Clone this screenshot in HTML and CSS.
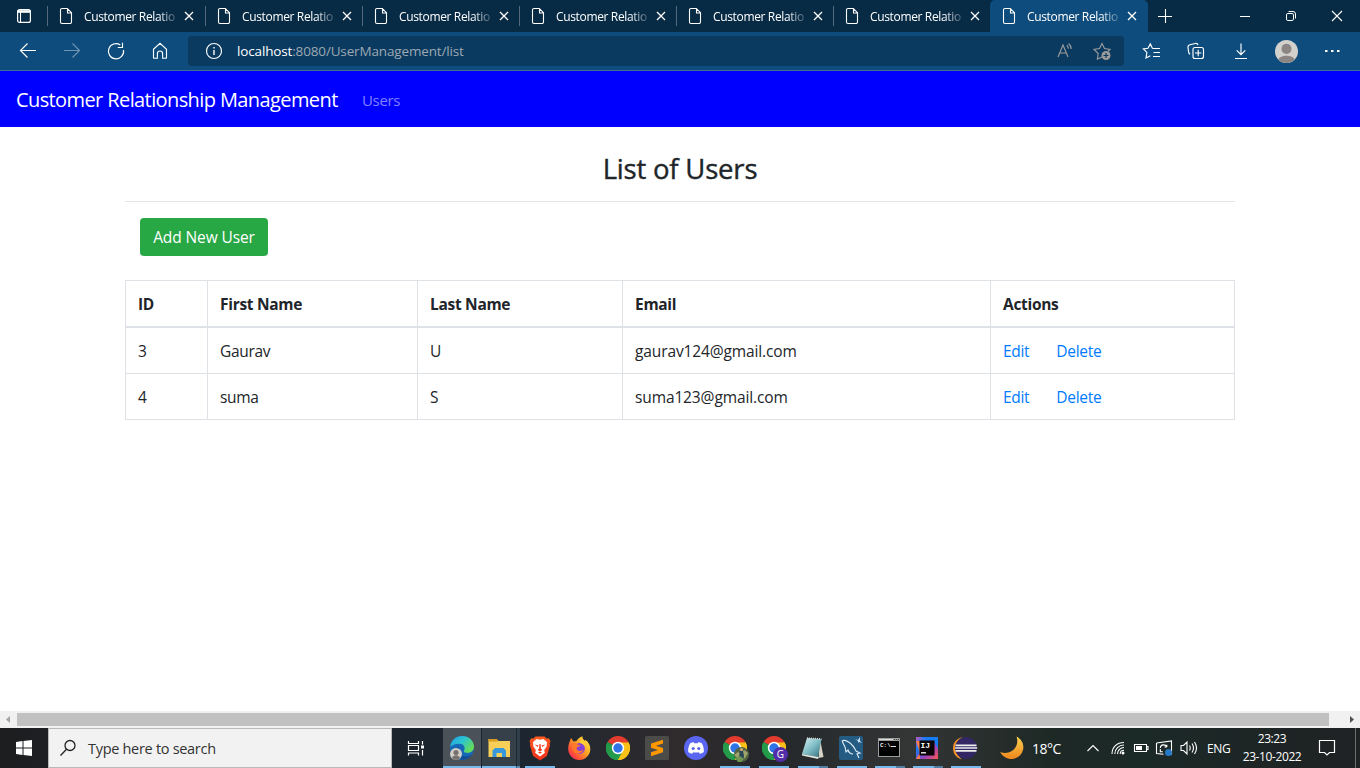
FILE: index.html
```html
<!DOCTYPE html>
<html lang="en">
<head>
<meta charset="utf-8">
<title>User Management</title>
<link rel="stylesheet" href="styles.css">
</head>
<body>
<svg class="defs" width="0" height="0">
  <defs>
    <symbol id="page" viewBox="0 0 14 18"><path d="M2.5 1.5h5.800l4.200 4.200v9.300a1.500 1.500 0 0 1-1.500 1.500H3A1.500 1.500 0 0 1 1.500 15V3A1.500 1.500 0 0 1 3 1.500zM8.500 1.800V6h4" fill="none" stroke="#fff" stroke-width="1.100"/></symbol>
    <symbol id="close" viewBox="0 0 10 10"><path d="M1 1l8 8M9 1l-8 8" fill="none" stroke="#fff" stroke-width="1.300"/></symbol>
    <symbol id="chrome" viewBox="0 0 24 24"><path d="M12 12L1.600 6A12 12 0 0 1 22.400 6z" fill="#e33b2e"/><path d="M12 12L22.400 6A12 12 0 0 1 12 24z" fill="#fbc116"/><path d="M12 12v12A12 12 0 0 1 1.600 6z" fill="#249b4b"/><path d="M12 6.400h10.600L12 12z" fill="#fbc116"/><path d="M6.700 15L12 24l5.300-9z" fill="#fbc116"/><path d="M6.700 15L1.600 6A12 12 0 0 0 12 24l5-9z" fill="#249b4b"/><path d="M12 24l5.300-9 5.300-8.600A12 12 0 0 1 12 24z" fill="#fbc116"/><circle cx="12" cy="12" r="6.200" fill="#fff"/><circle cx="12" cy="12" r="4.700" fill="#3075e8"/></symbol>
  </defs>
</svg>

<header class="tabstrip">
  <div class="workspace"><svg width="16" height="16" viewBox="0 0 16 16"><rect x="1.600" y="1.600" width="12.800" height="12.800" rx="2" fill="none" stroke="#fff" stroke-width="1.200"/><path d="M1.600 3.500h12.800" stroke="#fff" stroke-width="2.600"/><path d="M4.500 4v10.400" stroke="#fff" stroke-width="1.100"/></svg></div>
  <div class="tab first"><svg class="page"><use href="#page"/></svg><span class="tab-title">Customer Relatio</span><svg class="close"><use href="#close"/></svg></div>
  <div class="tab"><svg class="page"><use href="#page"/></svg><span class="tab-title">Customer Relatio</span><svg class="close"><use href="#close"/></svg></div>
  <div class="tab"><svg class="page"><use href="#page"/></svg><span class="tab-title">Customer Relatio</span><svg class="close"><use href="#close"/></svg></div>
  <div class="tab"><svg class="page"><use href="#page"/></svg><span class="tab-title">Customer Relatio</span><svg class="close"><use href="#close"/></svg></div>
  <div class="tab"><svg class="page"><use href="#page"/></svg><span class="tab-title">Customer Relatio</span><svg class="close"><use href="#close"/></svg></div>
  <div class="tab"><svg class="page"><use href="#page"/></svg><span class="tab-title">Customer Relatio</span><svg class="close"><use href="#close"/></svg></div>
  <div class="tab active"><svg class="page"><use href="#page"/></svg><span class="tab-title">Customer Relatio</span><svg class="close"><use href="#close"/></svg></div>
  <svg class="newtab" width="14" height="14" viewBox="0 0 14 14"><path d="M7.500 0v14M0 7.500h14" stroke="#fff" stroke-width="1.100"/></svg>
  <div class="window-controls">
    <span><svg width="12" height="12" viewBox="0 0 12 12"><path d="M1 6.500h10" stroke="#fff"/></svg></span>
    <span><svg width="12" height="12" viewBox="0 0 12 12" fill="none" stroke="#fff"><rect x="1.500" y="3.500" width="7" height="7" rx="1.400"/><path d="M3.500 1.500H8a2.500 2.500 0 0 1 2.500 2.500v4.500"/></svg></span>
    <span><svg width="12" height="12" viewBox="0 0 12 12"><path d="M1 1l10 10M11 1L1 11" stroke="#fff" stroke-width="1.100"/></svg></span>
  </div>
</header>

<div class="toolbar">
  <div class="nav-icons">
    <svg viewBox="0 0 20 20"><path d="M18 9.500H2.500M9.500 2.500l-7 7 7 7"/></svg>
    <svg class="dim" viewBox="0 0 20 20"><path d="M2 9.500h15.500M10.500 2.500l7 7-7 7"/></svg>
    <svg viewBox="0 0 20 20"><path d="M17.500 9A7.600 7.600 0 1 1 14.300 4M16.500 1.800v4.700h-4.700"/></svg>
    <svg viewBox="0 0 20 20"><path d="M3.500 8.300L10 2.400l6.500 5.900v8.300a.6.600 0 0 1-.6.600h-3.300v-4.600a2.600 2.600 0 0 0-5.200 0v4.600H4.100a.6.600 0 0 1-.6-.6z"/></svg>
  </div>
  <div class="address">
    <svg class="info" viewBox="0 0 18 18"><circle cx="9" cy="9" r="7.500"/><path d="M9 8v5M9 5v1.400" stroke-width="1.400"/></svg>
    <span class="url"><b>localhost</b>:8080/UserManagement/list</span>
    <svg class="addr-icon" viewBox="0 0 20 20"><path d="M3 16L8 4l5 12M4.700 12h6.600M11.800 4.300c1 .9 1.500 2 1.600 3.300M13.600 2.500c1.600 1.400 2.500 3.300 2.600 5.500"/></svg>
    <svg class="addr-icon" viewBox="0 0 20 20"><path d="M10 16l-4.600 2 .8-5.500L2 8.500l5.500-.9L10 2.500l2.500 5.100 5.500.9-2 2"/><circle cx="14" cy="14.500" r="4.500" fill="#9b9b9b" stroke="none"/><path d="M14 12v5M11.500 14.500h5" stroke="#0a3a60"/></svg>
  </div>
  <div class="tools">
    <svg viewBox="0 0 20 20"><path d="M10.500 7.500H18M10.500 7.500L8.300 2.800 6 7.300l-4.600.7 3.500 3.400-.9 5.600 4.300-2.300M11.500 11.500H18M11 15.500h7"/></svg>
    <svg viewBox="0 0 20 20"><rect x="7" y="6.500" width="10.500" height="11" rx="2"/><path d="M12.200 8.800v6.400M9 12h6.400M4.200 13.200c-.8-.3-1.400-.9-1.500-1.800L2 6.500c-.2-1.600.5-2.500 1.900-2.800l5.300-1.200c1.500-.3 2.500.3 2.800 1.600"/></svg>
    <svg viewBox="0 0 20 20"><path d="M10 2.500v11M5.700 9.300l4.300 4.300 4.300-4.300M4 17.500h12"/></svg>
    <svg class="avatar" viewBox="0 0 22 22"><circle cx="11" cy="11" r="11" fill="#d3d1ce"/><circle cx="11" cy="8.500" r="4.800" fill="#8b8683"/><path d="M3.200 18.700C5 14 17 14 18.800 18.700A11 11 0 0 1 3.200 18.700z" fill="#8b8683"/></svg>
    <svg viewBox="0 0 20 20"><path d="M3 10h2.500M9 10h2.500M15 10h2.500" stroke-width="2.200"/></svg>
  </div>
</div>

<nav class="navbar"><a class="brand">Customer Relationship Management</a><a class="nav-link">Users</a></nav>

<main class="content">
  <h3>List of Users</h3>
  <hr>
  <div class="actions"><a class="btn">Add New User</a></div>
  <table>
    <colgroup><col class="c-id"><col class="c-first"><col class="c-last"><col class="c-email"><col class="c-act"></colgroup>
    <thead><tr><th>ID</th><th>First Name</th><th>Last Name</th><th>Email</th><th>Actions</th></tr></thead>
    <tbody>
      <tr><td>3</td><td>Gaurav</td><td>U</td><td class="email">gaurav124@gmail.com</td><td><a class="edit">Edit</a><a>Delete</a></td></tr>
      <tr><td>4</td><td>suma</td><td>S</td><td class="email">suma123@gmail.com</td><td><a class="edit">Edit</a><a>Delete</a></td></tr>
    </tbody>
  </table>
</main>

<div class="scrollbar"><svg viewBox="0 0 17 17"><path d="M10 5v7L6 8.500z" fill="#a3a3a3"/></svg><div class="thumb"></div><svg class="right" viewBox="0 0 17 17"><path d="M7 5v7l4-3.500z" fill="#505050"/></svg></div>

<footer class="taskbar">
  <div class="start"><svg width="16" height="16" viewBox="0 0 16 16" fill="#fff"><path d="M0 2l6.500-.9v6.400H0zM7.500 1L16 0v7.500H7.500zM0 8.500h6.500v6.400L0 14zM7.500 8.500H16V16l-8.500-1z"/></svg></div>
  <div class="search"><svg width="18" height="18" viewBox="0 0 18 18" fill="none" stroke="#222" stroke-width="1.300"><circle cx="11" cy="6.500" r="5"/><path d="M7.500 10.200L1.500 16.500"/></svg><span>Type here to search</span></div>
  <div class="taskview"><svg width="18" height="18" viewBox="0 0 18 18" fill="none" stroke="#fff" stroke-width="1.200"><path d="M1.500 2v2.500h10V2M1.500 16.500V14h10v2.500M1.500 6.500h10v5h-10zM15.500 2v3.500M15.500 11v5.500"/><path d="M14 8h3" stroke-width="3"/></svg></div>
  <div class="app edge"><svg viewBox="0 0 24 24">
    <defs><linearGradient id="eg" x1="0" y1="0" x2="1" y2=".6"><stop offset="0" stop-color="#249ce0"/><stop offset=".5" stop-color="#2bc5d2"/><stop offset="1" stop-color="#65dc57"/></linearGradient></defs>
    <circle cx="12" cy="12" r="11.900" fill="#1769b8"/><path d="M.2 11C1.500 3.500 6 .1 12 .1c7 0 12 5 12 10.400 0 4-3 6.300-6.500 6.300-3 0-4-1.200-3.500-2.400 1.600-2.300.5-6-4-6.600C6 7.200 2 9 .2 11z" fill="url(#eg)"/><path d="M9 10c-1.700 3-.8 7.500 3 9.500 3.500 1.800 7.500.8 10-1.500-2.800 5-8.500 7-13 4.700C3 20 4 12 9 10z" fill="#124e95"/><circle cx="6" cy="18" r="6" fill="#d0cecb"/><circle cx="6" cy="16.500" r="2.600" fill="#77716e"/><path d="M2 22c1-3.600 7-3.600 8 0-2 2.500-6 2.500-8 0z" fill="#77716e"/></svg></div>
  <div class="app explorer"><svg viewBox="0 0 24 24"><path d="M1.500 3h8l2 2H23v16H1.500z" fill="#f7ce58"/><path d="M1.500 3h8l1.500 2.500H1.500z" fill="#d79b22"/><path d="M5.500 21v-6.500L8 12h8.500l2.500 2.500V21h-4v-4H9.500v4z" fill="#3898dc"/></svg></div>
  <div class="stack"></div>
  <div class="app run"><svg viewBox="0 0 24 24"><defs><linearGradient id="br" x2="0" y2="1"><stop stop-color="#ff5b21"/><stop offset="1" stop-color="#ed311b"/></linearGradient></defs><path d="M7.500.5h9l2 2 2.200-.3L22.500 5l-.8 2.300.4 1.700-3.200 11L12 24.500 5.100 20 1.900 9l.4-1.700L1.500 5l1.800-2.800 2.200.3z" fill="url(#br)"/><path d="M12 3.700l3.300-.6 3.700 3-.4 4.500-2.500 3.700.8 2.500L12 20.400l-4.900-3.600.8-2.500-2.500-3.700L5 6.100l3.700-3z" fill="#fff"/><path d="M6.500 8.500l4 1-.8 1.500zM17.500 8.500l-4 1 .8 1.500zM11.400 8h1.200l.3 4.500 1.500 1.500-2.400 1.200L9.600 14l1.500-1.500zM10 16.500l2-1 2 1-2 1.300z" fill="#f23b1e"/></svg></div>
  <div class="app"><svg viewBox="0 0 24 24"><defs><linearGradient id="ff" x1="1" y1="0" x2="0" y2="1"><stop stop-color="#fff34f"/><stop offset=".4" stop-color="#ffab25"/><stop offset=".75" stop-color="#ff4d38"/><stop offset="1" stop-color="#eb167f"/></linearGradient></defs><path d="M2.500 6L4 2l2.500 3.500 3-.5C11 2.500 13 1 15.500.3c-.5 2 1 3 2.200 4.500l.8-.8c3.200 2.300 4.800 5.200 4.800 9A11 11 0 0 1 1.200 13c0-3 .5-5 1.300-7z" fill="url(#ff)"/><circle cx="12.500" cy="12.500" r="5.400" fill="#8440d6"/><path d="M5 7.500c2-.7 4-.5 5.500 1l3 .6c-.5 1.500-2 1.600-3.200 1.900L9.500 13c2 2.700 5 2 7.200 1C14 19 7.500 18.500 6 14z" fill="#ff792d"/><path d="M14 4c3 2 4.500 4 4.500 7-1-2-3-3.700-5-4z" fill="#ffd43b"/></svg></div>
  <div class="app"><svg viewBox="0 0 24 24"><use href="#chrome"/></svg></div>
  <div class="app"><svg viewBox="0 0 24 24"><rect width="24" height="24" rx="1.500" fill="#4b4b4a"/><path d="M6 7.400l12-3.700v3.900l-7 2.200 7 2.300v4.200L6 20.200v-4l7-2.200-7-2.300z" fill="#ff9800"/></svg></div>
  <div class="app"><svg viewBox="0 0 24 24"><circle cx="12" cy="12" r="12" fill="#5966ef"/><path d="M9.500 6l-3.300 1.300C4.600 10 4 13 4.200 16c1.300 1 2.600 1.500 4 1.800l1-1.600c2 .5 3.700.5 5.600 0l1 1.600c1.400-.3 2.700-.8 4-1.800.2-3-.4-6-2-8.700L14.500 6l-.7 1.200h-3.600z" fill="#fff"/><circle cx="9.200" cy="12.500" r="1.600" fill="#5966ef"/><circle cx="14.800" cy="12.500" r="1.600" fill="#5966ef"/></svg></div>
  <div class="app run"><svg viewBox="0 0 24 24"><use href="#chrome"/><circle cx="18.500" cy="18.500" r="7.500" fill="#536442"/><path d="M11 19l4-3 3 2 3-4 4 3-3 5-5 2z" fill="#a0a66b"/><path d="M17 15h3l1 5-1 5h-3l-1-4z" fill="#28475b"/><circle cx="18.500" cy="13.500" r="1.500" fill="#d5ac83"/><path d="M12 22l5-2 4 3-3 3h-3z" fill="#719452"/></svg></div>
  <div class="app run"><svg viewBox="0 0 24 24"><use href="#chrome"/><circle cx="18.500" cy="18.500" r="7.500" fill="#512da8"/><text x="18.500" y="22" class="profile">G</text></svg></div>
  <div class="app run multi"><svg viewBox="0 0 24 24"><defs><linearGradient id="np" x2="1" y2="1"><stop stop-color="#d6f4f3"/><stop offset=".5" stop-color="#80bdc6"/><stop offset="1" stop-color="#326f7c"/></linearGradient></defs><path d="M19 3l3.500 18-5 1z" fill="#d5d3c7"/><path d="M6 2l14.500 1-3.500 18L1 18z" fill="url(#np)"/><path d="M1 18l16.500 3-.3 2L1 19.500z" fill="#e2e7df"/><path d="M6 2l14.500 1" stroke="#d4d5cf" stroke-width="1.500" stroke-dasharray="1 1"/></svg></div>
  <div class="app run narrow"><svg viewBox="0 0 24 24"><rect width="24" height="24" rx="2" fill="#245b83"/><path d="M3 5c3-2 5 0 8 2 4 3 5 6 6 8l4 2-3 .8L20 22M3 5l3 6 1 5 2-2c1 3 3 4 5 4" fill="none" stroke="#dfeff8" stroke-width="1.100"/><path d="M16 3l3 1 2-3v4l2 2-3-1-1 1V5z" fill="#c8e2f2"/></svg></div>
  <div class="app run multi narrow"><svg viewBox="0 0 24 24"><rect x="1" y="2" width="22" height="19" fill="#9d9e9e"/><rect x="2" y="5" width="20" height="15" fill="#020202"/><path d="M2 3.500h14" stroke="#ddd"/><path d="M17 3.500h5" stroke="#444" stroke-dasharray="1 1"/><text x="3" y="11" class="prompt">C:\.</text><path d="M14 10.500h5" stroke="#ddd"/></svg></div>
  <div class="app run multi narrow"><svg viewBox="0 0 24 24"><defs><linearGradient id="ij" x2="1" y2="1"><stop stop-color="#c757bc"/><stop offset=".3" stop-color="#147cf4"/><stop offset=".65" stop-color="#9c41bd"/><stop offset="1" stop-color="#fe554c"/></linearGradient></defs><rect x="1" y="1" width="22" height="22" fill="url(#ij)"/><path d="M1 5l4 12-4 6h4V5z" fill="#fc7b4c"/><path d="M5 1h18v12l-4-8z" fill="#147cf4"/><rect x="4.500" y="4.500" width="15" height="15" fill="#080408"/><text x="5.500" y="12" class="ij">IJ</text><path d="M6 16.800h5" stroke="#fff" stroke-width="1.300"/></svg></div>
  <div class="app run narrow"><svg viewBox="0 0 24 24"><path d="M9.500 1C2 3-.5 8 .2 14c.7 5 4 8 8.500 9.500C3.500 18 2 7 9.500 1z" fill="#f79425"/><circle cx="13" cy="12" r="11" fill="#332763"/><path d="M2.500 9.300h21M2.200 12h22M2.500 14.800h21" stroke="#eee" stroke-width="1.700"/></svg></div>
  <div class="weather"><svg width="24" height="24" viewBox="0 0 24 24"><defs><linearGradient id="mo" x2="0" y2="1"><stop stop-color="#f5d052"/><stop offset="1" stop-color="#ef861b"/></linearGradient></defs><path d="M16.500.5c5 2.500 8 8 6.500 13.500-2.500 10-17 13-22.800 2 6.500 2.300 12.500 0 15.500-5 2-3.500 2-7 .8-10.500z" fill="url(#mo)"/></svg><span>18°C</span></div>
  <svg class="tray chevron" viewBox="0 0 16 16"><path d="M2.500 11L8 5.500l5.500 5.500"/></svg>
  <svg class="tray wifi" viewBox="0 0 16 16"><path d="M2 14C2 7 7 2.500 14 2.500M4.800 14c0-5 4-9 9.200-9M7.500 14c0-3.500 3-6.500 6.500-6.500M10.200 14c0-2 1.600-3.700 3.800-3.700"/><circle cx="13" cy="13" r="1.500" fill="#fff" stroke="none"/></svg>
  <svg class="tray battery" viewBox="0 0 16 16"><path d="M1.500 4.500h12v7h-12zM13.500 6.500H15v3h-1.500"/><path d="M3 6h6v4H3z" fill="#fff" stroke="none"/></svg>
  <svg class="tray sync" viewBox="0 0 18 18"><path d="M1.500 4l15-2v13h-4M1.500 4v10.500l7 .8M5.300 9c.3-4 5.200-4 6.500-1V5.700M11.800 8H9.500M5.300 10v2.800h2.500"/><circle cx="13.500" cy="13.500" r="3.500" fill="#2779c7" stroke="none"/></svg>
  <svg class="tray volume" viewBox="0 0 18 18"><path d="M1 6.500h2.500L7 3v12l-3.500-3.500H1zM9.500 6.500c1 1.700 1 3.300 0 5M12 4.500c2 3 2 6 0 9M14.500 3c2.700 4 2.700 8 0 12"/></svg>
  <span class="lang">ENG</span>
  <div class="clock"><span>23:23</span><span class="date">23-10-2022</span></div>
  <svg class="notice" viewBox="0 0 18 18"><path d="M1.500 1.500h15v12h-5L9 16l-2.500-2.500h-5z"/></svg>
  <div class="desktop-edge"></div>
</footer>
</body>
</html>
```
FILE: styles.css
```css
* { box-sizing: border-box; }
body { margin: 0; width: 1360px; height: 768px; overflow: hidden; display: flex; flex-direction: column; background: #fff; color: #212529; font-family: "Open Sans", "Noto Sans", sans-serif; }
svg { display: block; flex: none; }
.defs { position: absolute; }

.tabstrip { height: 32px; background: #082b45; display: flex; align-items: center; flex: none; }
.workspace { width: 47px; padding-left: 16px; }
.tab { width: 157px; height: 32px; display: flex; align-items: center; padding-left: 12px; flex: none; position: relative; }
.tab.first { width: 158px; }
.tab:not(.active)::before { content: ""; position: absolute; left: 0; top: 6px; width: 1px; height: 20px; background: #56697a; }
.tab.active { width: 158px; background: #0d4c7c; border-radius: 5px 5px 0 0; }
.page { width: 14px; height: 18px; margin-right: 11px; }
.tab-title { width: 93px; white-space: nowrap; color: #fff; font-size: 12px; letter-spacing: -.35px; -webkit-mask-image: linear-gradient(90deg, #000 74px, transparent 96px); mask-image: linear-gradient(90deg, #000 74px, transparent 96px); }
.close { width: 10px; height: 10px; margin-left: 7px; }
.newtab { margin-left: 10px; }
.window-controls { display: flex; margin-left: auto; }
.window-controls span { width: 46px; display: flex; justify-content: center; }

.toolbar { height: 39px; background: #0d4c7c; border-bottom: 1px solid #3d7095; display: flex; align-items: center; flex: none; }
.toolbar svg { fill: none; stroke: #fff; stroke-width: 1.15; }
.nav-icons { width: 188px; display: flex; gap: 24px; padding-left: 18px; }
.nav-icons svg, .addr-icon { width: 20px; height: 20px; }
.nav-icons .dim { opacity: .4; }
.address { width: 936px; height: 30px; border-radius: 4px; background: #0a3a60; display: flex; align-items: center; padding: 0 12px 0 17px; }
.info { width: 18px; height: 18px; margin-right: 14px; }
.url { flex: 1; font-size: 13.5px; letter-spacing: -.15px; color: #9ca9b3; }
.url b { color: #fff; font-weight: 400; }
.toolbar .addr-icon { stroke: #9b9b9b; margin-left: 17px; }
.tools { flex: 1; display: flex; align-items: center; justify-content: space-between; padding: 0 18px; }
.tools svg { width: 20px; height: 20px; }
.tools .avatar { width: 23px; height: 23px; stroke: none; }

.navbar { height: 56px; background: #00f; display: flex; align-items: center; padding: 1px 0 0 16px; flex: none; }
.brand { width: 346px; color: #fff; font-size: 20px; letter-spacing: -.6px; white-space: nowrap; }
.nav-link { color: rgba(255,255,255,.5); font-size: 15px; letter-spacing: -.35px; }

.content { flex: 1; width: 1110px; margin: 0 auto; padding-top: 24px; min-height: 0; }
h3 { margin: 0 0 15px; font-size: 27.5px; line-height: 36px; height: 35px; font-weight: 500; letter-spacing: -.2px; -webkit-text-stroke: .4px #212529; text-align: center; }
hr { border: 0; border-top: 1px solid #e5e5e5; margin: 0; }
.actions { padding: 16px 15px 24px; display: flex; }
.btn { width: 128px; height: 38px; border-radius: 4px; background: #28a745; color: #fff; font-size: 15.5px; letter-spacing: -.1px; line-height: 39px; text-align: center; white-space: nowrap; }
table { width: 1109px; table-layout: fixed; border-collapse: collapse; font-size: 15.5px; letter-spacing: -.3px; }
.c-id { width: 82px; } .c-first { width: 210px; } .c-last { width: 205px; } .c-email { width: 368px; } .c-act { width: 244px; }
th, td { border: 1px solid #dee2e6; padding: 1px 12px 0; height: 46px; text-align: left; line-height: 24px; }
th { border-bottom-width: 2px; font-weight: 700; height: 46px; padding: 2px 12px 0; }
tbody tr:first-child td { height: 47px; }
.email { letter-spacing: -.12px; }
td a { color: #007bff; }
.edit { margin-right: 27px; }

.scrollbar { height: 17px; background: #f1f1f1; display: flex; align-items: center; flex: none; }
.scrollbar svg { width: 17px; height: 17px; }
.thumb { width: 1312px; height: 13px; background: #c1c1c1; }
.scrollbar .right { margin-left: auto; }

.taskbar { height: 40px; background: linear-gradient(90deg, #1d1e20 0, #1b232c 28%, #1c2630 38%, #302b2d 50%, #24282b 57%, #343535 67%, #1e2926 77%, #1b2927 84%, #202224 100%); display: flex; align-items: stretch; flex: none; color: #fff; }
.start { width: 48px; display: flex; align-items: center; justify-content: center; }
.search { width: 344px; background: #f2f2f2; border: 1px solid #b9b9b9; display: flex; align-items: center; padding-left: 10px; color: #333; font-size: 14.5px; letter-spacing: -.3px; }
.search span { margin-left: 11px; }
.taskview { width: 51px; display: flex; align-items: center; padding-left: 15px; }
.app { width: 39px; display: flex; align-items: center; justify-content: center; position: relative; flex: none; }
.app svg { width: 24px; height: 24px; overflow: visible; }
.app.narrow { width: 38px; }
.app.edge { width: 38px; background: #4b5159; border-bottom: 2px solid #76b9ed; padding-top: 2px; margin-right: 1px; }
.app.explorer { width: 34px; background: #354049; border-bottom: 2px solid #76b9ed; padding-top: 2px; }
.stack { width: 4px; background: #303e49; border-left: 1px solid #1c2832; border-bottom: 2px solid #5c8fb6; }
.app.run::after { content: ""; position: absolute; left: 5px; bottom: 0; width: 30px; height: 2px; background: #76b9ed; }
.app.multi::after { background: linear-gradient(90deg, #76b9ed 21px, #527fa3 21px); }
.profile { fill: #fff; font: 10px "Open Sans", sans-serif; text-anchor: middle; }
.prompt { fill: #eee; font: bold 6px "Liberation Mono", monospace; }
.ij { fill: #fff; font: bold 8px "Liberation Mono", monospace; }
.weather { width: 100px; margin-left: 16px; display: flex; align-items: center; font-size: 14px; letter-spacing: -.5px; }
.weather span { margin-left: 8px; }
.tray { align-self: center; width: 16px; height: 16px; fill: none; stroke: #fff; stroke-width: 1.1; }
.chevron { margin-left: -15px; }
.wifi { margin-left: 9px; }
.battery { margin-left: 7px; }
.sync { width: 18px; height: 18px; margin-left: 6px; }
.volume { width: 18px; height: 18px; margin-left: 7px; }
.lang { align-self: center; margin-left: 9px; width: 36px; font-size: 12px; letter-spacing: -.4px; }
.clock { width: 58px; display: flex; flex-direction: column; align-items: center; justify-content: center; font-size: 12px; line-height: 18px; letter-spacing: -.4px; white-space: nowrap; padding-bottom: 1px; }
.notice { width: 18px; height: 18px; margin-left: 17px; align-self: center; fill: none; stroke: #fff; stroke-width: 1.2; }
.desktop-edge { width: 1px; background: #697172; margin-left: auto; margin-right: 4px; }
```
